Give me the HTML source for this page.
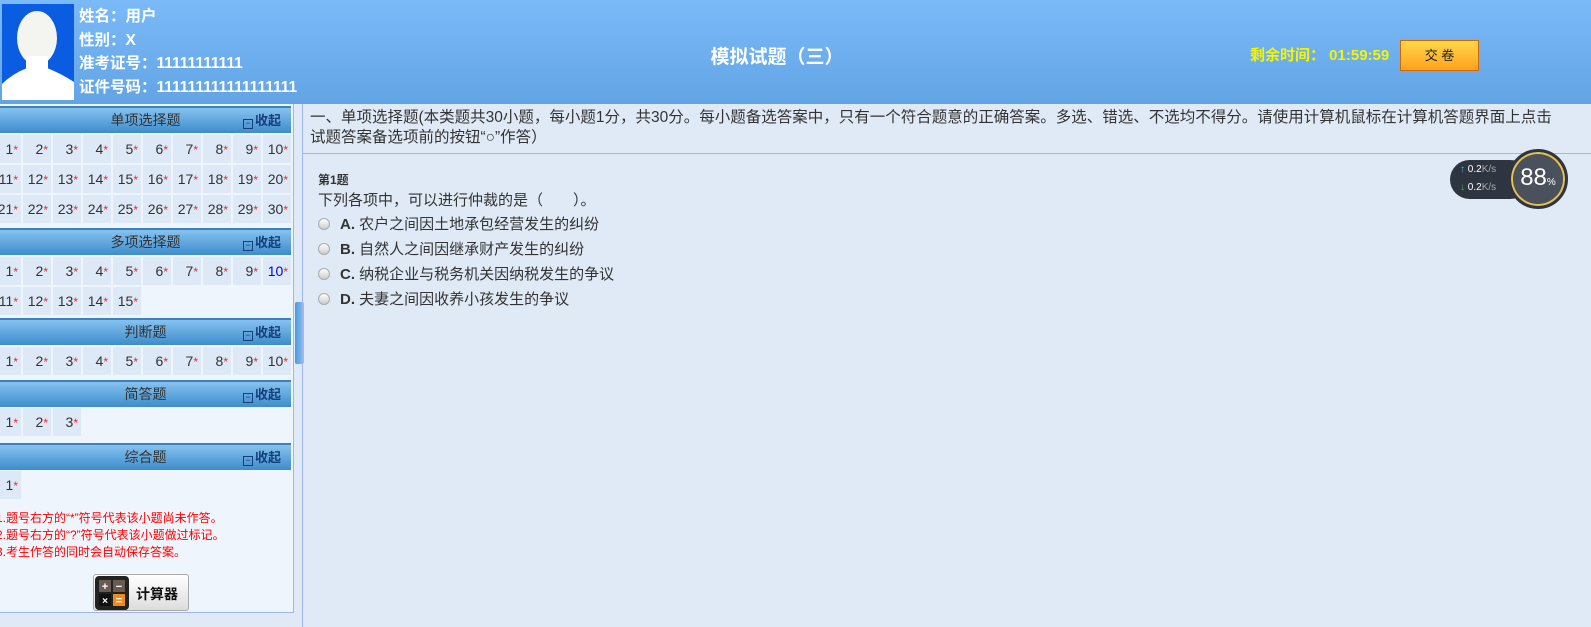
<!DOCTYPE html>
<html><head><meta charset="utf-8"><style>
*{margin:0;padding:0;box-sizing:border-box}
body{width:1591px;height:627px;overflow:hidden;background:#dfeaf6;font-family:"Liberation Sans","Noto Sans CJK SC",sans-serif;position:relative}
.hdr{position:absolute;left:0;top:0;width:1591px;height:104px;background:linear-gradient(#7bbaf9,#62a4e4)}
.photo{position:absolute;left:2px;top:4px;width:72px;height:96px;background:#0a5de0;overflow:hidden}
.info{position:absolute;left:79px;top:5px;color:#fff;font-weight:bold;font-size:15.5px;line-height:23.5px}
.title{position:absolute;left:0;width:1554px;top:42px;text-align:center;color:#fff;font-weight:bold;font-size:19px}
.timer{position:absolute;left:1250px;top:44px;color:#f5f500;font-weight:bold;font-size:15px}
.btn{position:absolute;left:1400px;top:40px;width:79px;height:31px;border:1px solid #d06a00;background:linear-gradient(#ffd84a,#fca21e);text-align:center;line-height:29px;font-size:13px;color:#222}
.side{position:absolute;left:0;top:104px;width:294px;height:509px;background:#eef5fd;border-right:1px solid #9fb6ea;border-bottom:1px solid #9fb6ea}
.sh{position:absolute;left:0;width:291px;height:27px;background:linear-gradient(#86c2ef,#3d8ccc);border-top:2px solid #3a82c0;color:#333;font-size:14px;text-align:center;line-height:25px}
.sh b{position:absolute;right:10px;top:0;color:#163f7a;font-size:13px}
.sh b i{font-style:normal;font-weight:normal;display:inline-block;width:10px;height:10px;border:1px solid #163f7a;font-size:9px;line-height:7px;margin-right:2px;vertical-align:-1px}
.c{position:absolute;width:28px;height:28px;background:#dde9f6;font-size:14px;color:#333;text-align:right;padding-right:3px;line-height:28px}
.c s{text-decoration:none;color:#f22;font-size:12px}
.notes{position:absolute;left:-4px;top:406px;color:#f00;font-size:12px;line-height:17px}
.calc{position:absolute;left:93px;top:470px;width:96px;height:37px;border:1px solid #aaa;border-radius:3px;background:linear-gradient(#fff,#ddd);font-size:14px;font-weight:bold;color:#111}
.tab{position:absolute;left:295px;top:302px;width:9px;height:62px;background:linear-gradient(90deg,#4a9ae0,#8cc4f0);border-radius:2px}
.main{position:absolute;left:302px;top:104px;width:1289px;height:523px;border-left:1px solid #9fb6ea}
.intro{position:absolute;left:7px;top:4px;width:1252px;font-size:15.5px;color:#333;line-height:20px}
.line{position:absolute;left:0;top:49px;width:1289px;height:1px;background:#9fb6ea}
.q{position:absolute;left:15px;top:67px;color:#333}
.opt{height:25px;font-size:15px;line-height:25px}
.opt i{display:inline-block;width:12px;height:12px;border-radius:50%;border:1px solid #aaa;background:linear-gradient(#fff,#ccc);margin-right:10px;vertical-align:-1px}
.w{position:absolute;left:1450px;top:160px;width:80px;height:39px;border-radius:20px;background:#2f3540;color:#fff;font-size:10px}
.g{position:absolute;left:1508px;top:149px;width:60px;height:60px;border-radius:50%;background:#4a505c;border:3px solid #2f3540;box-shadow:inset 0 0 0 2px #e6c050;color:#fff;font-size:24px;text-align:center;line-height:52px}
</style></head><body>
<div class="hdr">
<div class="photo"><svg width="72" height="96"><ellipse cx="35" cy="34" rx="20" ry="27" fill="#f4f4f0"/><path d="M0 96 L0 80 Q10 70 25 64 L45 64 Q60 70 72 78 L72 96Z" fill="#fff"/><rect x="24" y="52" width="22" height="16" fill="#fff"/></svg></div>
<div class="info">姓名：用户<br>性别：X<br>准考证号：11111111111<br>证件号码：111111111111111111</div>
<div class="title">模拟试题（三）</div>
<div class="timer">剩余时间： 01:59:59</div>
<div class="btn">交 卷</div>
</div>
<div class="side">
<div class="sh" style="top:2px">单项选择题<b><i>−</i>收起</b></div>
<div class="sh" style="top:124px">多项选择题<b><i>−</i>收起</b></div>
<div class="sh" style="top:214px">判断题<b><i>−</i>收起</b></div>
<div class="sh" style="top:276px">简答题<b><i>−</i>收起</b></div>
<div class="sh" style="top:339px">综合题<b><i>−</i>收起</b></div>
<div id="cells"></div>
<div class="notes">1.题号右方的“*”符号代表该小题尚未作答。<br>2.题号右方的“?”符号代表该小题做过标记。<br>3.考生作答的同时会自动保存答案。</div>
<div class="calc"><svg width="34" height="34" style="position:absolute;left:1px;top:1px"><rect x="0" y="0" width="34" height="34" rx="4" fill="#222"/><rect x="4" y="4" width="12" height="12" fill="#6a5a50"/><rect x="18" y="4" width="12" height="12" fill="#6a5a50"/><rect x="4" y="18" width="12" height="12" fill="#111"/><rect x="18" y="18" width="12" height="12" fill="#f08a1a"/><text x="10" y="14" fill="#fff" font-size="11" text-anchor="middle">+</text><text x="24" y="14" fill="#fff" font-size="11" text-anchor="middle">−</text><text x="10" y="28" fill="#fff" font-size="10" text-anchor="middle">×</text><text x="24" y="28" fill="#fff" font-size="11" text-anchor="middle">=</text></svg><span style="position:absolute;left:42px;top:9px">计算器</span></div>
</div>
<div class="tab"></div>
<div class="main">
<div class="intro">一、单项选择题(本类题共30小题，每小题1分，共30分。每小题备选答案中，只有一个符合题意的正确答案。多选、错选、不选均不得分。请使用计算机鼠标在计算机答题界面上点击试题答案备选项前的按钮“○”作答）</div>
<div class="line"></div>
<div class="q">
<div style="font-size:12px;font-weight:bold;height:18px">第1题</div>
<div style="font-size:15px;height:23px">下列各项中，可以进行仲裁的是（　　）。</div>
<div class="opt"><i></i><b>A.</b> 农户之间因土地承包经营发生的纠纷</div>
<div class="opt"><i></i><b>B.</b> 自然人之间因继承财产发生的纠纷</div>
<div class="opt"><i></i><b>C.</b> 纳税企业与税务机关因纳税发生的争议</div>
<div class="opt"><i></i><b>D.</b> 夫妻之间因收养小孩发生的争议</div>
</div>
</div>
<div class="w"><div style="position:absolute;left:10px;top:4px"><span style="color:#4ab0f0">↑</span> 0.2<span style="color:#aaa">K/s</span></div><div style="position:absolute;left:10px;top:22px"><span style="color:#3c3">↓</span> 0.2<span style="color:#aaa">K/s</span></div></div>
<div class="g">88<span style="font-size:10px">%</span></div>
<script>
var h='',rows=[[0,10,1,0],[30,10,11,0],[60,10,21,0],[122,10,1,1],[152,5,11,0],[212,10,1,0],[275,3,1,0],[338,1,1,0]];
var tops=[31,61,91,153,183,243,304,367];
rows.forEach(function(r,k){for(var i=0;i<r[1];i++){var n=r[2]+i;var col=(r[3]&&n==10)?'color:#00f':'';h+='<div class="c" style="left:'+(-7+i*30)+'px;top:'+tops[k]+'px;'+col+'">'+n+'<s>*</s></div>';}});
document.getElementById('cells').innerHTML=h;
</script>
</body></html>
